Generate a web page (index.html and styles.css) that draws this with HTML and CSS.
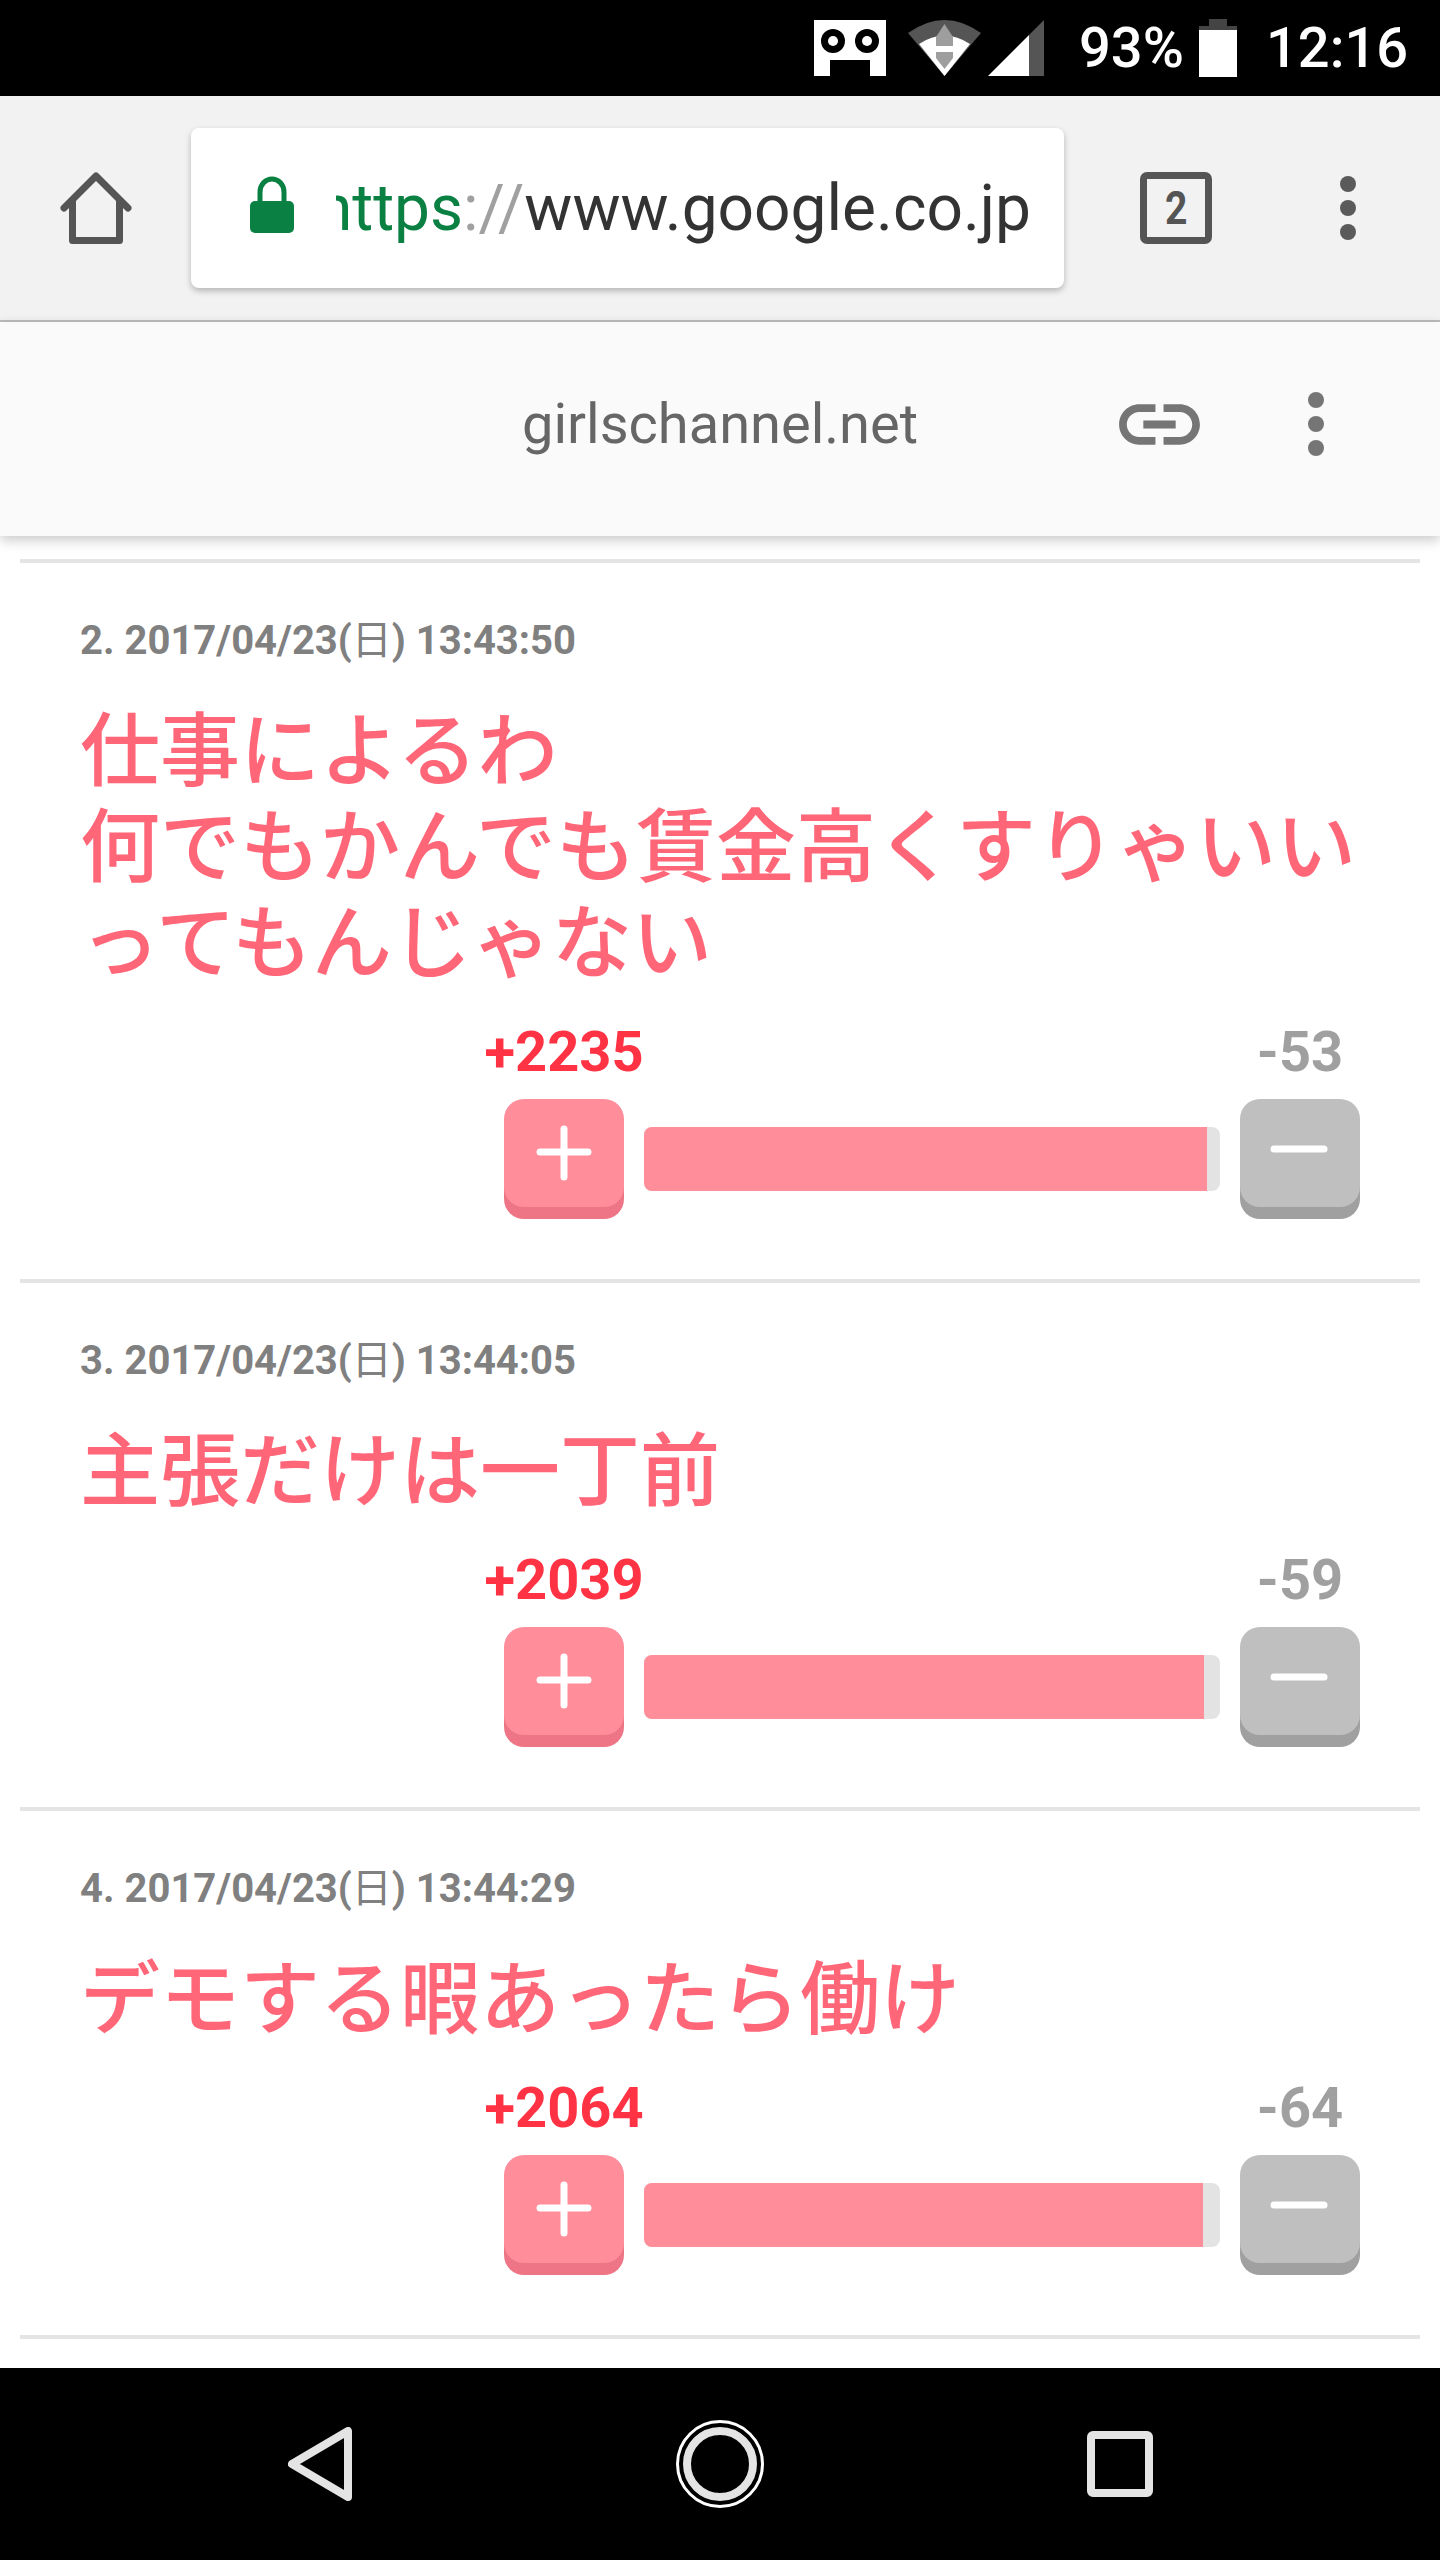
FILE: index.html
```html
<!DOCTYPE html>
<html lang="ja">
<head>
    <meta charset="UTF-8">
    <title>girlschannel.net</title>
    <link rel="stylesheet" href="styles.css">
</head>
<body>
    <div class="page">
        <div class="status-bar">
            <svg class="ic-cast" width="72" height="56" viewBox="0 0 72 56">
                <path fill="#fff" d="M0 0H72V56H56V40H16V56H0Z"/>
                <ellipse cx="19" cy="21" rx="12" ry="12" fill="#000"/>
                <ellipse cx="53" cy="21" rx="12" ry="12" fill="#000"/>
                <circle cx="19" cy="21" r="5" fill="#fff"/>
                <circle cx="53" cy="21" r="5" fill="#fff"/>
            </svg>
            <svg class="ic-wifi" width="73" height="56" viewBox="0 0 73 56">
                <path fill="#555" d="M0 13Q36.5 -13 73 13L36.5 56Z"/>
                <path fill="#fff" d="M11 24Q36.5 7 62 24L36.5 56Z"/>
                <path fill="#9e9e9e" d="M36.5 4L45 17V26H28V17Z"/>
                <path fill="#9e9e9e" d="M28 32H45V38L36.5 49L28 38Z"/>
            </svg>
            <svg class="ic-signal" width="56" height="56" viewBox="0 0 56 56">
                <path fill="#555" d="M56 0V56H41V15Z"/>
                <path fill="#fff" d="M41 15V56H0Z"/>
            </svg>
            <span class="battery-text">93%</span>
            <svg class="ic-battery" width="38" height="58" viewBox="0 0 38 58">
                <path fill="#444" d="M10 0H28V7H38V11H0V7H10Z"/>
                <path fill="#fff" d="M0 11H38V58H0Z"/>
            </svg>
            <span class="clock">12:16</span>
        </div>

        <div class="toolbar">
            <svg class="ic-home" width="72" height="72" viewBox="0 0 72 72">
                <path fill="none" stroke="#555" stroke-width="7" stroke-linecap="round" stroke-linejoin="round" d="M4 36L36 4L68 36"/>
                <path fill="none" stroke="#555" stroke-width="7" stroke-linejoin="round" d="M12.500 28V68.500H59.500V28"/>
            </svg>
            <div class="omnibox">
                <svg class="ic-lock" width="44" height="57" viewBox="0 0 44 57">
                    <path fill="none" stroke="#0b8043" stroke-width="5" d="M10 26V16a12 13 0 0 1 24 0V26"/>
                    <rect y="25" width="44" height="32" rx="5" fill="#0b8043"/>
                </svg>
                <div class="url"><span class="url-scheme">https</span><span class="url-sep">://</span>www.google.co.jp</div>
            </div>
            <div class="tab-count"><span class="tab-num">2</span></div>
            <div class="dots dots-dark"><i></i><i></i><i></i></div>
        </div>

        <div class="cct-bar">
            <div class="cct-host">girlschannel.net</div>
            <svg class="ic-link" width="97" height="97" viewBox="0 0 24 24">
                <path fill="#757575" d="M3.900 12c0-1.710 1.390-3.100 3.100-3.100h4V7H7c-2.760 0-5 2.240-5 5s2.240 5 5 5h4v-1.900H7c-1.710 0-3.100-1.390-3.100-3.100zM8 13h8v-2H8v2zm9-6h-4v1.900h4c1.710 0 3.100 1.390 3.100 3.100s-1.390 3.100-3.100 3.100h-4V17h4c2.760 0 5-2.240 5-5s-2.240-5-5-5z"/>
            </svg>
            <div class="dots dots-light"><i></i><i></i><i></i></div>
        </div>

        <div class="comments">
            <div class="comment">
                <div class="comment-date">2. 2017/04/23(<span class="date-day">日</span>) 13:43:50</div>
                <div class="comment-body">仕事によるわ<br>何でもかんでも賃金高くすりゃいい<br>ってもんじゃない</div>
                <div class="votes">
                    <div class="count-plus">+2235</div>
                    <div class="count-minus">-53</div>
                    <div class="btn btn-plus"><svg width="60" height="56" viewBox="0 0 60 56"><path stroke="#fff" stroke-width="7" stroke-linecap="round" d="M30 4V52M6 27H54"/></svg></div>
                    <div class="bar"><div class="bar-fill" style="width: 97.7%"></div></div>
                    <div class="btn btn-minus"><svg width="60" height="56" viewBox="0 0 60 56"><path stroke="#fff" stroke-width="7" stroke-linecap="round" d="M4 24H54"/></svg></div>
                </div>
            </div>
            <div class="comment">
                <div class="comment-date">3. 2017/04/23(<span class="date-day">日</span>) 13:44:05</div>
                <div class="comment-body">主張だけは一丁前</div>
                <div class="votes">
                    <div class="count-plus">+2039</div>
                    <div class="count-minus">-59</div>
                    <div class="btn btn-plus"><svg width="60" height="56" viewBox="0 0 60 56"><path stroke="#fff" stroke-width="7" stroke-linecap="round" d="M30 4V52M6 27H54"/></svg></div>
                    <div class="bar"><div class="bar-fill" style="width: 97.2%"></div></div>
                    <div class="btn btn-minus"><svg width="60" height="56" viewBox="0 0 60 56"><path stroke="#fff" stroke-width="7" stroke-linecap="round" d="M4 24H54"/></svg></div>
                </div>
            </div>
            <div class="comment">
                <div class="comment-date">4. 2017/04/23(<span class="date-day">日</span>) 13:44:29</div>
                <div class="comment-body">デモする暇あったら働け</div>
                <div class="votes">
                    <div class="count-plus">+2064</div>
                    <div class="count-minus">-64</div>
                    <div class="btn btn-plus"><svg width="60" height="56" viewBox="0 0 60 56"><path stroke="#fff" stroke-width="7" stroke-linecap="round" d="M30 4V52M6 27H54"/></svg></div>
                    <div class="bar"><div class="bar-fill" style="width: 97%"></div></div>
                    <div class="btn btn-minus"><svg width="60" height="56" viewBox="0 0 60 56"><path stroke="#fff" stroke-width="7" stroke-linecap="round" d="M4 24H54"/></svg></div>
                </div>
            </div>
        </div>

        <div class="nav-bar">
            <svg width="64" height="74" viewBox="0 0 64 74">
                <path fill="none" stroke="#e4e4e4" stroke-width="8" stroke-linejoin="round" d="M60 4V70L4 37Z"/>
            </svg>
            <svg width="88" height="88" viewBox="0 0 88 88">
                <circle cx="44" cy="44" r="42.500" fill="none" stroke="#fff" stroke-width="3"/>
                <circle cx="44" cy="44" r="33" fill="none" stroke="#e4e4e4" stroke-width="8"/>
            </svg>
            <svg width="66" height="66" viewBox="0 0 66 66">
                <rect x="4" y="4" width="58" height="58" rx="2" fill="none" stroke="#e4e4e4" stroke-width="8"/>
            </svg>
        </div>
    </div>
</body>
</html>
```
FILE: styles.css
```css
body {
    margin: 0;
    background-color: white;
    font-family: Roboto, "Noto Sans CJK JP", sans-serif;
}
.page {
    width: 1440px;
    height: 2560px;
    display: flex;
    flex-direction: column;
    overflow: hidden;
}

/* status bar */
.status-bar {
    height: 96px;
    flex-shrink: 0;
    background-color: black;
    color: white;
    display: flex;
    align-items: center;
    font-size: 56px;
    font-weight: 500;
    line-height: 56px;
    padding-left: 814px;
    box-sizing: border-box;
}
.ic-wifi {
    margin-left: 22px;
}
.ic-signal {
    margin-left: 7px;
}
.battery-text {
    margin-left: 35px;
    width: 102px;
}
.ic-battery {
    margin-left: 18px;
}
.clock {
    margin-left: 29px;
}

/* browser toolbar */
.toolbar {
    height: 226px;
    flex-shrink: 0;
    background-color: #f2f2f2;
    display: flex;
    align-items: center;
    box-sizing: border-box;
    padding-left: 60px;
    border-bottom: 2px solid #bdbdbd;
    position: relative;
}
.omnibox {
    width: 873px;
    height: 160px;
    margin-left: 59px;
    padding: 0 33px 0 59px;
    box-sizing: border-box;
    background-color: white;
    border-radius: 8px;
    box-shadow: 0 3px 6px rgba(0, 0, 0, 0.25);
    display: flex;
    align-items: center;
}
.ic-lock {
    flex-shrink: 0;
    margin-bottom: 8px;
}
.url {
    margin-left: 42px;
    flex: 1;
    min-width: 0;
    overflow: hidden;
    display: flex;
    justify-content: flex-end;
    white-space: pre;
    font-size: 64px;
    line-height: 90px;
    padding-top: 2px;
    color: #333;
}
.url-scheme {
    color: #0b8043;
}
.url-sep {
    color: #a0a0a0;
}
.tab-count {
    width: 72px;
    height: 72px;
    margin-left: 76px;
    box-sizing: border-box;
    border: 7px solid #555;
    border-radius: 7px;
    color: #555;
    font-size: 46px;
    font-weight: bold;
    line-height: 58px;
    text-align: center;
}
.tab-num {
    display: inline-block;
    transform: scaleX(0.85);
}
.dots {
    display: flex;
    flex-direction: column;
    gap: 8px;
}
.dots i {
    display: block;
    width: 16px;
    height: 16px;
    border-radius: 50%;
}
.dots-dark {
    margin-left: 128px;
}
.dots-dark i {
    background-color: #5a5a5a;
}
.dots-light i {
    background-color: #757575;
}

/* custom tab bar */
.cct-bar {
    height: 214px;
    flex-shrink: 0;
    background-color: #fafafa;
    display: flex;
    align-items: center;
    padding: 0 0 10px 522px;
    box-sizing: border-box;
    box-shadow: 0 4px 12px rgba(0, 0, 0, 0.22);
    position: relative;
}
.cct-host {
    width: 589px;
    font-size: 56px;
    line-height: 70px;
    color: #666;
}
.dots-light {
    margin-left: 100px;
}

/* comments */
.comments {
    flex: 1;
    margin: 23px 20px 0;
    border-top: 4px solid #e4e4e4;
}
.comment {
    border-bottom: 4px solid #e4e4e4;
    padding: 58px 60px 60px;
}
.comment-date {
    font-size: 40px;
    line-height: 40px;
    font-weight: bold;
    color: #808080;
}
.date-day {
    font-weight: 400;
}
.comment-body {
    margin-top: 35px;
    font-family: "Noto Sans CJK JP", sans-serif;
    font-weight: 500;
    font-size: 80px;
    line-height: 96px;
    color: #ff6678;
}
.votes {
    margin-top: 40px;
    display: grid;
    grid-template-columns: 120px 576px 120px;
    column-gap: 20px;
    justify-content: end;
    align-items: start;
}
.count-plus,
.count-minus {
    font-size: 56px;
    line-height: 56px;
    font-weight: bold;
    justify-self: center;
    white-space: nowrap;
    margin-bottom: 19px;
}
.count-plus {
    grid-column: 1;
    color: #ff3344;
}
.count-minus {
    grid-column: 3;
    color: #a0a0a0;
}
.btn {
    height: 108px;
    margin-bottom: 12px;
    border-radius: 20px;
    display: flex;
    align-items: center;
    justify-content: center;
}
.btn-plus {
    background-color: #ff8d9a;
    box-shadow: 0 12px 0 #ee7585;
}
.btn-minus {
    background-color: #bfbfbf;
    box-shadow: 0 12px 0 #a0a0a0;
}
.bar {
    height: 64px;
    margin-top: 28px;
    background-color: #e3e3e3;
    border-radius: 8px;
    overflow: hidden;
}
.bar-fill {
    height: 100%;
    background-color: #ff8d9a;
}

/* nav bar */
.nav-bar {
    height: 192px;
    flex-shrink: 0;
    background-color: black;
    display: flex;
    align-items: center;
    box-sizing: border-box;
    padding-left: 288px;
    gap: 323.5px;
}
```
